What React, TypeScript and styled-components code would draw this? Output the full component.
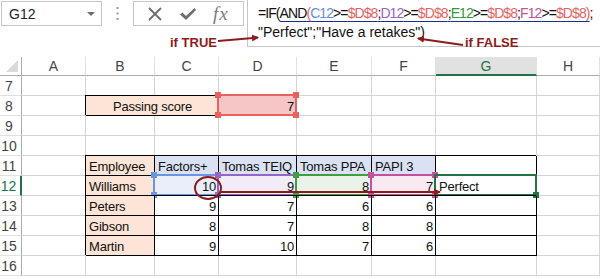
import * as React from 'react';
import styled, { createGlobalStyle } from 'styled-components';

const Global = createGlobalStyle`
    html, body {
        margin: 0;
        padding: 0;
        background: #ffffff;
        overflow: hidden;
    }
    body {
        font-family: "Liberation Sans", Arial, sans-serif;
    }
`;

const GREEN = '#217346';
const DARKRED = '#8e1b1b';

const Page = styled.div`
    position: relative;
    width: 600px;
    height: 279px;
    overflow: hidden;
    background: #ffffff;
`;

/* formula bar */

const Bar = styled.div`
    display: flex;
    align-items: flex-start;
    height: 57px;
`;

const NameBox = styled.div`
    box-sizing: border-box;
    width: 101px;
    height: 25px;
    margin: 1px 0 0 1px;
    border: 1px solid #c6c6c6;
    display: flex;
    align-items: center;
    justify-content: space-between;
    padding: 0 6px 0 7px;
    font-size: 14px;
    color: #222;
`;

const Caret = styled.span`
    width: 0;
    height: 0;
    border-left: 4px solid transparent;
    border-right: 4px solid transparent;
    border-top: 4px solid #6d6d6d;
`;

const Grip = styled.div`
    width: 31px;
    height: 27px;
    display: flex;
    align-items: center;
    justify-content: center;
`;

const Buttons = styled.div`
    box-sizing: border-box;
    width: 111px;
    height: 25px;
    margin-top: 1px;
    border: 1px solid #c6c6c6;
    display: flex;
    align-items: center;
    justify-content: space-around;
    padding: 0 6px;
    color: #6e6e6e;
`;

const Fx = styled.span`
    font-family: "Liberation Serif", "Times New Roman", serif;
    font-style: italic;
    font-size: 19px;
    color: #7a7a7a;
    letter-spacing: 1px;
`;

const Formula = styled.div`
    box-sizing: border-box;
    flex: 1;
    height: 47px;
    margin-left: 3px;
    border-left: 1px solid #c6c6c6;
    border-bottom: 1px solid #c6c6c6;
    padding: 4px 0 0 10px;
    font-size: 14px;
    line-height: 19px;
    color: #111;
    white-space: nowrap;
`;

const Line = styled.div<{ $tight?: boolean }>`
    letter-spacing: ${p => (p.$tight ? '-0.92px' : '0')};
`;

const Ref = styled.span<{ $c: string }>`
    color: ${p => p.$c};
`;

const Arg = styled.span`
    text-decoration: underline;
    text-decoration-color: #1d2f8a;
    text-underline-offset: 3px;
`;

/* grid */

const Sheet = styled.div`
    display: grid;
    grid-template-columns: 22px 64px 69px 64px 78px 75px 64px 101px 63px;
    grid-auto-rows: 20px;
    grid-template-rows: 19px;
    font-size: 13px;
    letter-spacing: -0.2px;
    color: #111;
`;

const Corner = styled.div`
    box-sizing: border-box;
    position: relative;
    border-right: 1px solid #ababab;
    border-bottom: 1px solid #ababab;
    &::after {
        content: "";
        position: absolute;
        right: 3px;
        bottom: 3px;
        width: 0;
        height: 0;
        border-left: 12px solid transparent;
        border-bottom: 12px solid #dadada;
    }
`;

const ColHead = styled.div<{ $on?: boolean }>`
    box-sizing: border-box;
    display: flex;
    align-items: center;
    justify-content: center;
    font-size: 14px;
    letter-spacing: 0;
    color: ${p => (p.$on ? GREEN : '#444')};
    background: ${p => (p.$on ? '#e1e1e1' : '#fff')};
    border-right: 1px solid #e0e0e0;
    border-bottom: ${p => (p.$on ? `2px solid ${GREEN}` : '1px solid #ababab')};
`;

const RowHead = styled.div<{ $on?: boolean }>`
    box-sizing: border-box;
    display: flex;
    align-items: center;
    justify-content: center;
    padding: 1px 3px 0 0;
    font-size: 14px;
    letter-spacing: 0;
    color: ${p => (p.$on ? GREEN : '#444')};
    border-right: ${p => (p.$on ? `2px solid ${GREEN}` : '1px solid #ababab')};
    border-bottom: 1px solid #e0e0e0;
`;

const Cell = styled.div<{ $bg?: string; $box?: boolean; $align?: string; $span?: number }>`
    box-sizing: border-box;
    position: relative;
    grid-column: span ${p => p.$span || 1};
    display: flex;
    align-items: center;
    justify-content: ${p => p.$align || 'flex-start'};
    padding: 1px 2px 0 3px;
    white-space: nowrap;
    background: ${p => p.$bg || 'transparent'};
    border-right: 1px solid ${p => (p.$box ? '#000' : '#d4d4d4')};
    border-bottom: 1px solid ${p => (p.$box ? '#000' : '#d4d4d4')};
    box-shadow: ${p => (p.$box ? '-1px -1px 0 #000' : 'none')};
    z-index: ${p => (p.$box ? 1 : 0)};
`;

const Range = styled.div<{ $c: string }>`
    position: absolute;
    left: -2px;
    top: -2px;
    right: -1px;
    bottom: -1px;
    border: 2px solid ${p => p.$c};
    z-index: 3;
    pointer-events: none;
`;

const Handle = styled.span<{ $c: string; $x: string; $y: string }>`
    position: absolute;
    width: 6px;
    height: 6px;
    background: ${p => p.$c};
    ${p => p.$x}: -4px;
    ${p => p.$y}: -4px;
`;

const Overlay = styled.svg`
    position: absolute;
    left: 0;
    top: 0;
    z-index: 10;
    pointer-events: none;
`;

type Spec = {
    t?: string;
    bg?: string;
    box?: boolean;
    num?: boolean;
    center?: boolean;
    span?: number;
    range?: string;
    fill?: 'all' | 'br';
};

const PEACH = '#fce4d6';
const HEAD = '#d9e1f2';

const blank = (n: number): Spec[] => Array.from({ length: n }, () => ({}));

const rows: { n: number; cells: Spec[] }[] = [
    { n: 7, cells: blank(8) },
    {
        n: 8,
        cells: [
            {},
            { t: 'Passing score', bg: PEACH, box: true, center: true, span: 2 },
            { t: '7', num: true, bg: '#f6c5c5', box: true, range: '#e8625f', fill: 'all' },
            {}, {}, {}, {},
        ],
    },
    { n: 9, cells: blank(8) },
    { n: 10, cells: blank(8) },
    {
        n: 11,
        cells: [
            {},
            { t: 'Employee', bg: PEACH, box: true },
            { t: 'Factors+', bg: HEAD, box: true },
            { t: 'Tomas TEIQ', bg: HEAD, box: true },
            { t: 'Tomas PPA', bg: HEAD, box: true },
            { t: 'PAPI 3', bg: HEAD, box: true },
            { box: true },
            {},
        ],
    },
    {
        n: 12,
        cells: [
            {},
            { t: 'Williams', bg: PEACH, box: true },
            { t: '10', num: true, bg: '#e9eefa', box: true, range: '#6a95e0', fill: 'all' },
            { t: '9', num: true, bg: '#f1ecf7', box: true, range: '#9467c6', fill: 'all' },
            { t: '8', num: true, bg: '#e9f3e7', box: true, range: '#3f9e43', fill: 'all' },
            { t: '7', num: true, bg: '#f9e9f3', box: true, range: '#c5509b', fill: 'all' },
            { t: 'Perfect', box: true, range: GREEN, fill: 'br' },
            {},
        ],
    },
    ...[
        [13, 'Peters', '9', '7', '6', '6'],
        [14, 'Gibson', '8', '7', '8', '8'],
        [15, 'Martin', '9', '10', '7', '6'],
    ].map(([n, name, ...vals]) => ({
        n: n as number,
        cells: [
            {},
            { t: name as string, bg: PEACH, box: true },
            ...vals.map(v => ({ t: v as string, num: true, box: true })),
            { box: true },
            {},
        ] as Spec[],
    })),
    { n: 16, cells: blank(8) },
];

const cols = ['A', 'B', 'C', 'D', 'E', 'F', 'G', 'H'];

const SheetCell = ({ s }: { s: Spec }) => (
    <Cell
        $bg={s.bg}
        $box={s.box}
        $span={s.span}
        $align={s.num ? 'flex-end' : s.center ? 'center' : 'flex-start'}
    >
        {s.t}
        {s.range && (
            <Range $c={s.range}>
                {s.fill === 'all' ? (
                    <>
                        <Handle $c={s.range} $x="left" $y="top" />
                        <Handle $c={s.range} $x="right" $y="top" />
                        <Handle $c={s.range} $x="left" $y="bottom" />
                        <Handle $c={s.range} $x="right" $y="bottom" />
                    </>
                ) : (
                    <Handle $c={s.range} $x="right" $y="bottom" />
                )}
            </Range>
        )}
    </Cell>
);

export default function App() {
    return (
        <Page>
            <Global />
            <Bar>
                <NameBox>
                    G12
                    <Caret />
                </NameBox>
                <Grip>
                    <svg width="3" height="13" viewBox="0 0 3 13">
                        <rect x="0.5" y="0" width="2" height="2" fill="#9a9a9a" />
                        <rect x="0.5" y="5.5" width="2" height="2" fill="#9a9a9a" />
                        <rect x="0.5" y="11" width="2" height="2" fill="#9a9a9a" />
                    </svg>
                </Grip>
                <Buttons>
                    <svg width="14" height="14" viewBox="0 0 14 14">
                        <path d="M1 1 L13 13 M13 1 L1 13" stroke="#6e6e6e" strokeWidth="1.8" fill="none" />
                    </svg>
                    <svg width="18" height="14" viewBox="0 0 18 14">
                        <path d="M1 7.5 L3.5 5.5 L7 9 L15.5 1 L17 3 L7 13 Z" fill="#6e6e6e" />
                    </svg>
                    <Fx>fx</Fx>
                </Buttons>
                <Formula>
                    <Line $tight>
                        =IF(
                        <Arg>
                            AND<Ref $c="#e8625f">(</Ref>
                            <Ref $c="#5f8fdf">C12</Ref>&gt;=<Ref $c="#e8625f">$D$8</Ref>;
                            <Ref $c="#9467c6">D12</Ref>&gt;=<Ref $c="#e8625f">$D$8</Ref>;
                            <Ref $c="#2e9a3a">E12</Ref>&gt;=<Ref $c="#e8625f">$D$8</Ref>;
                            <Ref $c="#c5509b">F12</Ref>&gt;=<Ref $c="#e8625f">$D$8)</Ref>
                        </Arg>
                        ;
                    </Line>
                    <Line>"Perfect";"Have a retakes")</Line>
                </Formula>
            </Bar>
            <Sheet>
                <Corner />
                {cols.map(c => (
                    <ColHead key={c} $on={c === 'G'}>{c}</ColHead>
                ))}
                {rows.map(r => (
                    <React.Fragment key={r.n}>
                        <RowHead $on={r.n === 12}>{r.n}</RowHead>
                        {r.cells.map((s, i) => (
                            <SheetCell key={i} s={s} />
                        ))}
                    </React.Fragment>
                ))}
            </Sheet>
            <Overlay width="600" height="279" viewBox="0 0 600 279">
                <defs>
                    <marker id="head" markerWidth="8" markerHeight="8" refX="6" refY="4" orient="auto" markerUnits="userSpaceOnUse">
                        <path d="M0 0.5 L7 4 L0 7.5 Z" fill={DARKRED} />
                    </marker>
                </defs>
                <text x="170" y="47" fontFamily="Liberation Sans, Arial, sans-serif" fontWeight="bold" fontSize="13" fill={DARKRED}>
                    if TRUE
                </text>
                <line x1="218" y1="41" x2="258" y2="37.5" stroke={DARKRED} strokeWidth="2" markerEnd="url(#head)" />
                <text x="465" y="47" fontFamily="Liberation Sans, Arial, sans-serif" fontWeight="bold" fontSize="13" fill={DARKRED}>
                    if FALSE
                </text>
                <line x1="463" y1="45" x2="418" y2="38.5" stroke={DARKRED} strokeWidth="2" markerEnd="url(#head)" />
                <ellipse cx="208" cy="188" rx="13" ry="11" fill="none" stroke={DARKRED} strokeWidth="2" />
                <line x1="221" y1="192" x2="440" y2="192" stroke={DARKRED} strokeWidth="2" markerEnd="url(#head)" />
            </Overlay>
        </Page>
    );
}
